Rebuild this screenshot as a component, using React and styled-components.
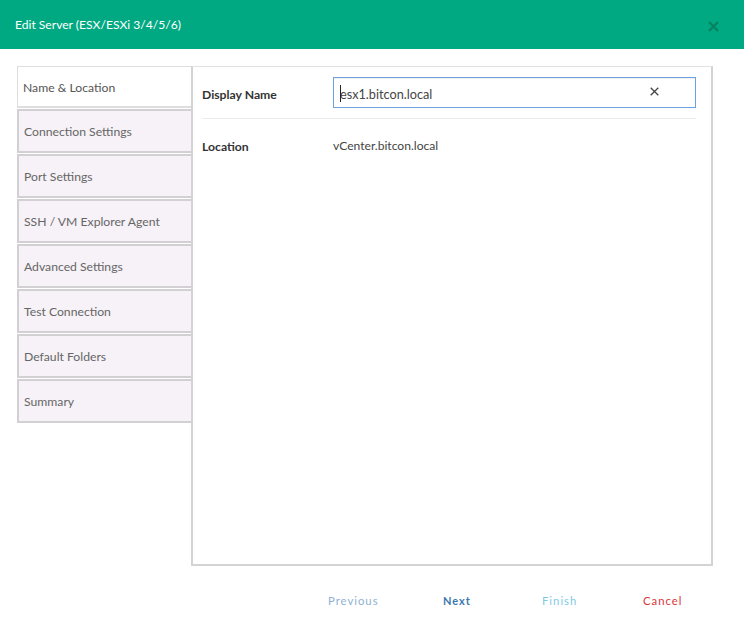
import React from "react";
import styled, { createGlobalStyle } from "styled-components";

const Global = createGlobalStyle`
  html, body { margin: 0; padding: 0; background: #fff; }
  body { font-family: Lato, "Liberation Sans", sans-serif; }
`;

const Dialog = styled.div`
  width: 744px;
  height: 629px;
  display: flex;
  flex-direction: column;
  overflow: hidden;
  background: #fff;
`;

const Header = styled.header`
  height: 49px;
  flex: none;
  background: #01a982;
  display: flex;
  align-items: center;
  justify-content: space-between;
  padding: 0 25px 0 15px;
  box-sizing: border-box;
`;

const Title = styled.h1`
  margin: 0;
  font-size: 12.1px;
  font-weight: 400;
  color: #fff;
`;

const CloseIcon = styled.svg`
  width: 11px;
  height: 11px;
  margin-top: 4px;
`;

const Body = styled.div`
  display: flex;
  margin: 17px 31px 0 17px;
  height: 500px;
  flex: none;
`;

const TabList = styled.nav`
  width: 175px;
  flex: none;
  display: flex;
  flex-direction: column;
  gap: 1px;
`;

const Tab = styled.div`
  box-sizing: border-box;
  height: ${(p) => (p.$active ? "42px" : "44px")};
  display: flex;
  align-items: center;
  font-size: 12.2px;
  padding-left: 5px;
  padding-top: ${(p) => (p.$active ? "2px" : "0")};
  color: ${(p) => (p.$active ? "#555" : "#666")};
  background: ${(p) => (p.$active ? "#fff" : "#f6f2f7")};
  border: solid ${(p) => (p.$active ? "#dedede" : "#d2d0d2")};
  border-width: ${(p) => (p.$active ? "1px 0 2px 1px" : "2px 0 2px 2px")};
`;

const Panel = styled.section`
  flex: 1;
  box-sizing: border-box;
  margin-left: -1px;
  border: solid #d3d3d3;
  border-width: 1px 2px 2px 2px;
  border-top-color: #e2e2e2;
  padding: 10px 15px 0 9px;
`;

const Row = styled.div`
  display: flex;
  align-items: center;
  border-bottom: ${(p) => (p.$divided ? "1px solid #ececec" : "none")};
  padding-bottom: ${(p) => (p.$divided ? "10px" : "0")};
  margin-bottom: ${(p) => (p.$divided ? "18px" : "0")};
`;

const Label = styled.span`
  width: 131px;
  flex: none;
  font-size: 12.2px;
  font-weight: 700;
  color: #333;
  padding-top: ${(p) => (p.$nudge ? "4px" : "2px")};
`;

const Value = styled.span`
  font-size: 12.1px;
  color: #444;
`;

const Field = styled.div`
  flex: 1;
  box-sizing: border-box;
  height: 31px;
  border: 1px solid #6ea2de;
  background: #fff;
  display: flex;
  align-items: center;
  justify-content: space-between;
  padding: 3px 36px 0 6px;
  font-size: 12.7px;
  color: #444;
  box-shadow: inset 0 2px 1px -1px #f0f0f0;
`;

const FieldText = styled.span`
  position: relative;
  &::before {
    content: "";
    position: absolute;
    left: 0;
    top: -1px;
    bottom: 0;
    width: 1px;
    background: #222;
  }
`;

const ClearIcon = styled.svg`
  width: 9px;
  height: 9px;
  margin-top: -6px;
`;

const Footer = styled.footer`
  display: grid;
  grid-template-columns: 115px 99px 101px auto;
  justify-content: start;
  padding: 28px 0 0 328px;
`;

const Action = styled.span`
  font-size: ${(p) => (p.$strong ? "11px" : "11.3px")};
  letter-spacing: 1px;
  color: ${(p) => p.$color};
  font-weight: ${(p) => (p.$strong ? 700 : 400)};
`;

const steps = [
  "Connection Settings",
  "Port Settings",
  "SSH / VM Explorer Agent",
  "Advanced Settings",
  "Test Connection",
  "Default Folders",
  "Summary",
];

export default function App() {
  return (
    <Dialog>
      <Global />
      <Header>
        <Title>Edit Server (ESX/ESXi 3/4/5/6)</Title>
        <CloseIcon viewBox="0 0 11 11">
          <path d="M1 1l9 9M10 1l-9 9" stroke="#06835f" strokeWidth="2.4" fill="none" />
        </CloseIcon>
      </Header>
      <Body>
        <TabList>
          <Tab $active>Name &amp; Location</Tab>
          {steps.map((s) => (
            <Tab key={s}>{s}</Tab>
          ))}
        </TabList>
        <Panel>
          <Row $divided>
            <Label $nudge>Display Name</Label>
            <Field>
              <FieldText>esx1.bitcon.local</FieldText>
              <ClearIcon viewBox="0 0 9 9">
                <path d="M.7.7l7.6 7.6M8.3.7L.7 8.3" stroke="#444" strokeWidth="1.3" fill="none" />
              </ClearIcon>
            </Field>
          </Row>
          <Row>
            <Label>Location</Label>
            <Value>vCenter.bitcon.local</Value>
          </Row>
        </Panel>
      </Body>
      <Footer>
        <Action $color="#8fb1d3">Previous</Action>
        <Action $color="#3d78ad" $strong>Next</Action>
        <Action $color="#7fcbe3">Finish</Action>
        <Action $color="#d9363a">Cancel</Action>
      </Footer>
    </Dialog>
  );
}
